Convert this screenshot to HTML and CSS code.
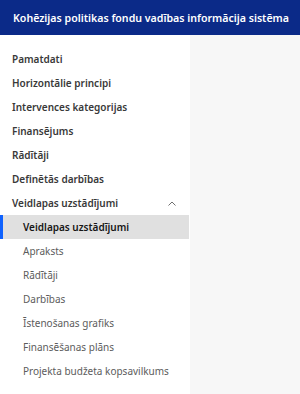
FILE: index.html
```html
<!DOCTYPE html>
<html lang="lv">
<head>
  <meta charset="UTF-8">
  <title>KP VIS</title>
  <link rel="stylesheet" href="styles.css">
</head>
<body>

  <div class="header">Kohēzijas politikas fondu vadības informācija sistēma</div>

  <div class="layout">
    <div class="side-nav">
      <div class="nav-item">Pamatdati</div>
      <div class="nav-item">Horizontālie principi</div>
      <div class="nav-item">Intervences kategorijas</div>
      <div class="nav-item">Finansējums</div>
      <div class="nav-item">Rādītāji</div>
      <div class="nav-item">Definētās darbības</div>
      <div class="nav-item nav-group">
        <span>Veidlapas uzstādījumi</span>
        <svg class="chevron" width="8" height="5" viewBox="0 0 8 5">
          <path d="M0.5 4.5 L4 1 L7.5 4.5" fill="none" stroke="#6f6f6f" stroke-width="1"/>
        </svg>
      </div>
      <div class="sub-item active">Veidlapas uzstādījumi</div>
      <div class="sub-item">Apraksts</div>
      <div class="sub-item">Rādītāji</div>
      <div class="sub-item">Darbības</div>
      <div class="sub-item">Īstenošanas grafiks</div>
      <div class="sub-item">Finansēšanas plāns</div>
      <div class="sub-item">Projekta budžeta kopsavilkums</div>
    </div>
    <div class="content"></div>
  </div>

</body>
</html>
```

FILE: styles.css
```css
* {
  margin: 0;
  padding: 0;
  box-sizing: border-box;
  font-family: "Noto Sans", "Open Sans", sans-serif;
}

body {
  width: 300px;
  height: 394px;
  display: flex;
  flex-direction: column;
  background-color: #f7f7f7;
}

.header {
  height: 35px;
  background-color: #0b2a88;
  color: white;
  font-size: 10.6px;
  font-weight: 600;
  display: flex;
  align-items: center;
  padding-left: 13px;
  white-space: nowrap;
}

.layout {
  flex: 1;
  display: flex;
}

.side-nav {
  width: 190px;
  background-color: white;
  padding-top: 12px;
}

.content {
  flex: 1;
  background-color: #f7f7f7;
}

.nav-item {
  height: 24px;
  display: flex;
  align-items: center;
  padding-left: 12px;
  font-size: 10px;
  font-weight: 600;
  color: #393939;
}

.nav-group {
  justify-content: space-between;
  padding-right: 14px;
}

.sub-item {
  height: 24px;
  display: flex;
  align-items: center;
  padding-left: 20px;
  font-size: 10px;
  color: #5c5c5c;
  border-left: 3px solid transparent;
  margin-right: 1px;
}

.sub-item.active {
  background-color: #e0e0e0;
  border-left-color: #0f62fe;
  color: #161616;
  font-weight: 600;
}
```
